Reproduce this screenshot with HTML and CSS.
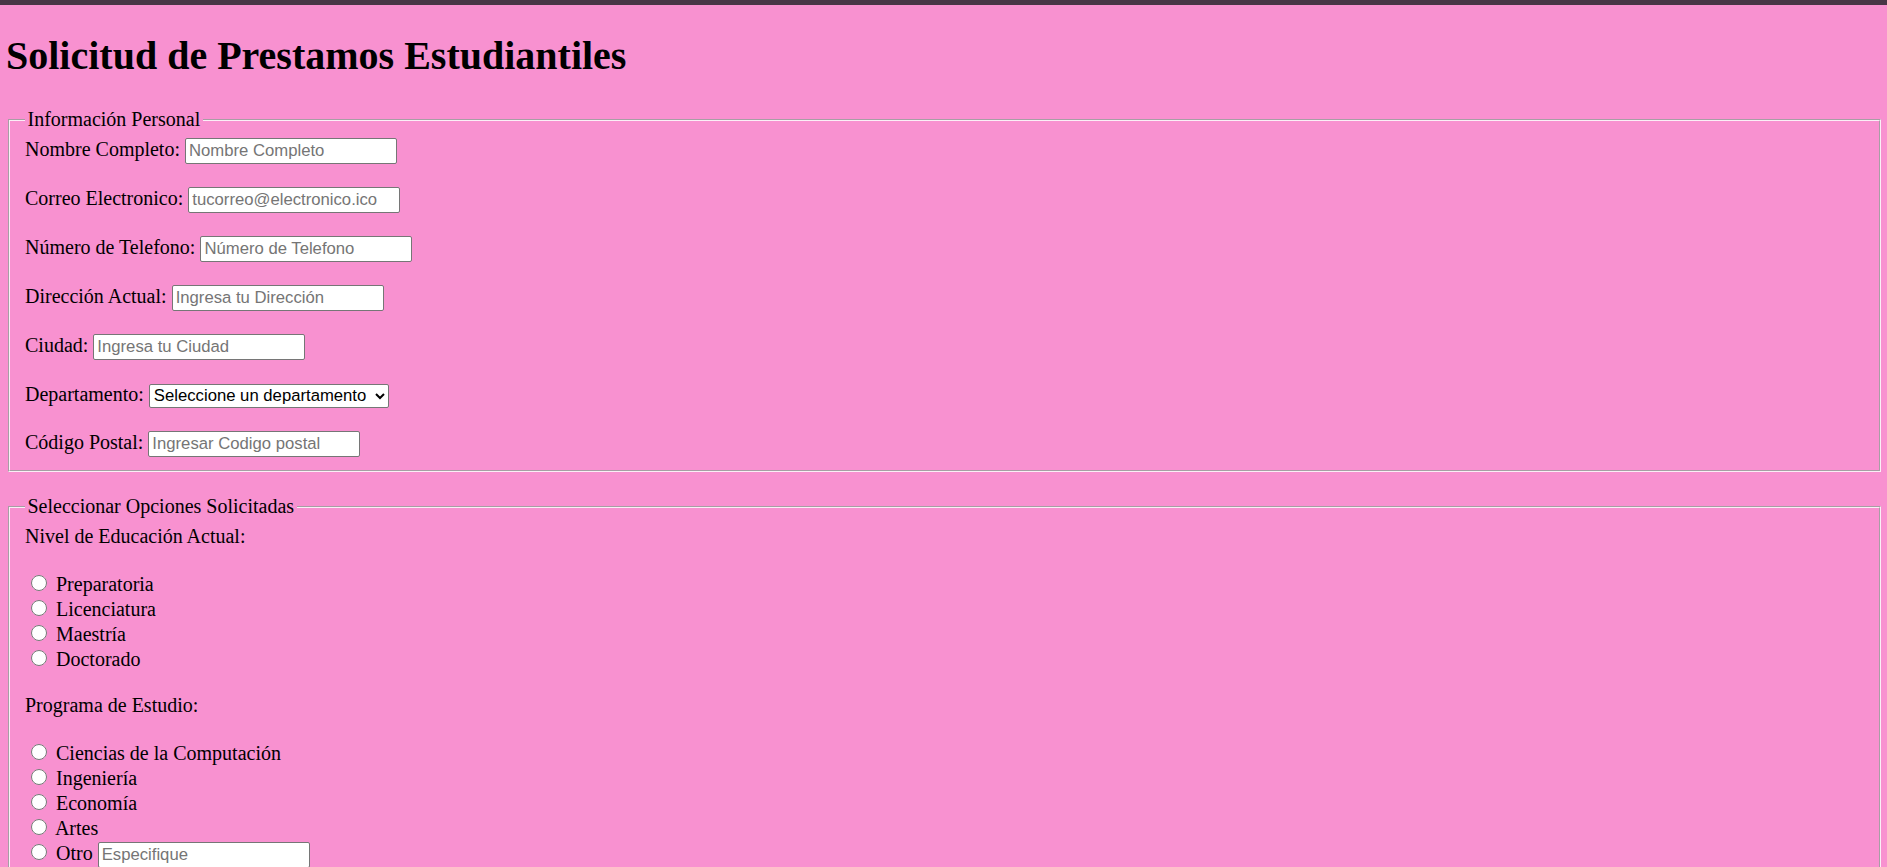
FILE: index.html
```html
<!DOCTYPE html>
<html lang="es">
<head>
<meta charset="utf-8">
<title>Solicitud de Prestamos Estudiantiles</title>
<link rel="stylesheet" href="styles.css">
</head>
<body>
<div class="topbar"></div>
<main class="page">
  <h1 class="title">Solicitud de Prestamos Estudiantiles</h1>
  <form class="form">
    <fieldset class="group">
      <legend class="legend">Información Personal</legend>
      <label class="label" for="nombre">Nombre Completo:</label> <input class="field" type="text" id="nombre" placeholder="Nombre Completo"><br><br>
      <label class="label" for="correo">Correo Electronico:</label> <input class="field" type="email" id="correo" placeholder="tucorreo@electronico.ico"><br><br>
      <label class="label" for="tel">Número de Telefono:</label> <input class="field" type="tel" id="tel" placeholder="Número de Telefono"><br><br>
      <label class="label" for="dir">Dirección Actual:</label> <input class="field" type="text" id="dir" placeholder="Ingresa tu Dirección"><br><br>
      <label class="label" for="ciudad">Ciudad:</label> <input class="field" type="text" id="ciudad" placeholder="Ingresa tu Ciudad"><br><br>
      <label class="label" for="depto">Departamento:</label> <select class="select" id="depto">
        <option>Seleccione un departamento</option>
        <option>Antioquia</option>
        <option>Cundinamarca</option>
      </select><br><br>
      <label class="label" for="cp">Código Postal:</label> <input class="field" type="text" id="cp" placeholder="Ingresar Codigo postal">
    </fieldset>
    <fieldset class="group group-next">
      <legend class="legend">Seleccionar Opciones Solicitadas</legend>
      <span class="label">Nivel de Educación Actual:</span><br><br>
      <input class="radio" type="radio" name="nivel" id="n1"> <label for="n1">Preparatoria</label><br>
      <input class="radio" type="radio" name="nivel" id="n2"> <label for="n2">Licenciatura</label><br>
      <input class="radio" type="radio" name="nivel" id="n3"> <label for="n3">Maestría</label><br>
      <input class="radio" type="radio" name="nivel" id="n4"> <label for="n4">Doctorado</label><br><br>
      <span class="label">Programa de Estudio:</span><br><br>
      <input class="radio" type="radio" name="prog" id="p1"> <label for="p1">Ciencias de la Computación</label><br>
      <input class="radio" type="radio" name="prog" id="p2"> <label for="p2">Ingeniería</label><br>
      <input class="radio" type="radio" name="prog" id="p3"> <label for="p3">Economía</label><br>
      <input class="radio" type="radio" name="prog" id="p4"> <label for="p4">Artes</label><br>
      <input class="radio" type="radio" name="prog" id="p5"> <label for="p5">Otro</label> <input class="field" type="text" placeholder="Especifique">
    </fieldset>
  </form>
</main>
</body>
</html>
```
FILE: styles.css
```css
html {
  background: #f891d0;
}

body {
  margin: 0;
  font-family: "Liberation Serif", "Times New Roman", serif;
  font-size: 20px;
  color: #000;
  background: #f891d0;
}

.topbar {
  height: 5px;
  background: #483646;
}

.page {
  padding: 0 6px 0 8px;
}

.title {
  font-size: 40px;
  font-weight: bold;
  margin: 27px 0 29px -2px;
}

.form {
  margin: 0;
}

.group {
  margin: 0;
  border: 2px groove #fbeef6;
  padding: 7px 15px 13.5px;
}

.group-next {
  margin-top: 23.3px;
}

.legend {
  padding: 0 2.5px;
}

.field {
  box-sizing: border-box;
  width: 212px;
  height: 26px;
  border: 1px solid #767676;
  border-radius: 2px;
  padding: 1px 3px;
  font-family: "Liberation Sans", Arial, sans-serif;
  font-size: 16.7px;
  background: #fff;
  color: #000;
}

.field::placeholder {
  color: #757575;
}

.select {
  box-sizing: border-box;
  width: 240px;
  height: 24px;
  border: 1px solid #767676;
  border-radius: 2px;
  font-family: "Liberation Sans", Arial, sans-serif;
  font-size: 16.7px;
  background: #fff;
  color: #000;
}

.radio {
  width: 16px;
  height: 16px;
  margin: 4px 4px 0 6px;
}
```
